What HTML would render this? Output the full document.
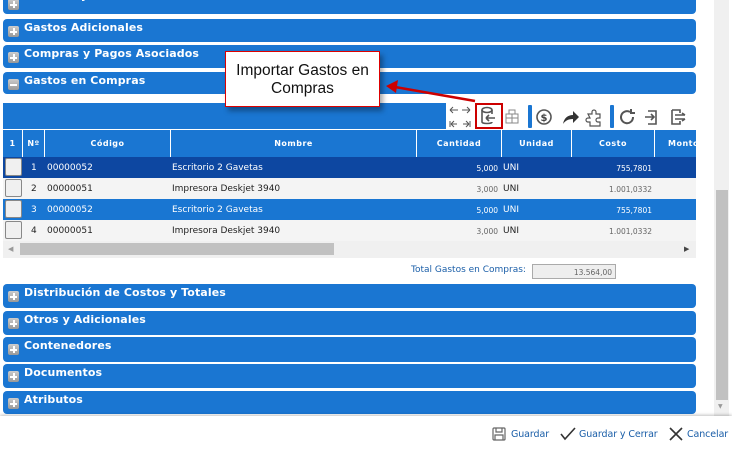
<!DOCTYPE html>
<html><head><meta charset="utf-8"><style>
*{margin:0;padding:0;box-sizing:border-box}
body{width:732px;height:449px;overflow:hidden;background:#fff;font-family:"DejaVu Sans","Liberation Sans",sans-serif;position:relative}
.bar{position:absolute;left:3px;width:693px;background:#1a76d2;border-radius:4px;color:#fff;font-weight:bold;font-size:11px}
.bar span.t{position:absolute;left:21px;top:2px;letter-spacing:0.1px}
.pm{position:absolute;left:5px;top:7px;width:11px;height:11px;background:linear-gradient(#ccc,#999);border-radius:2px}
.pm:before{content:"";position:absolute;left:2px;top:5px;width:7px;height:1.5px;background:#fff}
.pm.p:after{content:"";position:absolute;left:5px;top:2px;width:1.5px;height:7px;background:#fff}
.abs{position:absolute}
.hdr{position:absolute;top:130px;height:27px;background:#1a76d2;color:#fff;font-size:8px;font-weight:bold;display:flex;left:3px;width:693px}
.hdr div{border-right:1px solid #fff;display:flex;align-items:center;justify-content:center;letter-spacing:0.5px}
.row{position:absolute;left:3px;width:693px;height:21px;font-size:9px;font-family:"DejaVu Sans",sans-serif}
.row .c{position:absolute;top:6px}
.cb{position:absolute;left:2px;top:1px;width:17px;height:18px;border:1px solid #888;border-radius:2px;background:#f0f0f0}
.r1{background:#0d47a1;color:#fff}.r3{background:#1976d2;color:#fff}.r2{background:#f4f4f4;color:#222}
.num{font-size:7.5px;text-align:right}
.btn{font-size:9.5px;color:#1a5ea8;top:429px;letter-spacing:-0.1px;white-space:nowrap}
</style></head><body>
<div class="bar" style="top:-8px;height:22px"><div class="pm p"></div><span class="t" style="top:-3px">Gastos Fijos</span></div>
<div class="bar" style="top:19px;height:23px"><div class="pm p"></div><span class="t">Gastos Adicionales</span></div>
<div class="bar" style="top:45px;height:23px"><div class="pm p"></div><span class="t">Compras y Pagos Asociados</span></div>
<div class="bar" style="top:72px;height:22px"><div class="pm"></div><span class="t">Gastos en Compras</span></div>

<div class="abs" style="left:3px;top:103px;width:443px;height:26px;background:#1a76d2"></div>
<svg class="abs" style="left:446px;top:102px" width="250" height="28" viewBox="0 0 250 28" fill="none" stroke="#555" stroke-width="1.6">
<path d="M4 8h8M4 8l3-3M4 8l3 3M16 8h8M24 8l-3-3M24 8l-3 3" stroke-width="1"/>
<path d="M4 19v6M5 22h6M5 22l3-3M5 22l3 3M17 22h6M23 22l-3-3M23 22l-3 3M24 19v6" stroke-width="1"/>
<ellipse cx="41" cy="8" rx="5" ry="2.5"/><path d="M36 8v12c0 2 10 2 10 0M46 8v4M40 16h9M40 16l3-3M40 16l3 3"/>
<path d="M60 12h6v4h-6zM66 12h6v4h-6zM63 8h6v4h-6zM60 16h6v5h-6zM66 16h6v5h-6z" stroke="#888" stroke-width="1"/>
<rect x="82" y="3" width="4" height="23" fill="#1a76d2" stroke="none" rx="1"/>
<circle cx="98" cy="15" r="7"/><text x="98" y="19" font-size="10" text-anchor="middle" fill="#444" stroke="none" font-weight="bold">$</text>
<path d="M117 22c1-6 5-9 10-9v-4l6 6-6 6v-4c-5 0-8 2-10 5z" fill="#333" stroke="none"/>
<path d="M142 12h4v-2a2 2 0 014 0v2h4v4h-2a2 2 0 000 4h2v4h-10v-4h-2a2 2 0 010-4h2z" stroke-width="1.2"/>
<rect x="164" y="3" width="4" height="23" fill="#1a76d2" stroke="none" rx="1"/>
<path d="M187 15a6 6 0 11-3-5M185 7v4h4" stroke-width="2"/>
<path d="M199 15h9M205 12l3 3-3 3M202 9h8v13h-8"/>
<path d="M226 8h8v3M226 8v14h8v-3M229 13h10M229 17h10M236 11l3 2M236 19l3-2"/>
</svg>
<div class="abs" style="left:475px;top:103px;width:28px;height:26px;border:2px solid #c00"></div>

<div class="hdr">
<div style="width:20px">1</div><div style="width:22px">Nº</div><div style="width:126px">Código</div><div style="width:246px">Nombre</div><div style="width:85px">Cantidad</div><div style="width:70px">Unidad</div><div style="width:83px">Costo</div><div style="width:41px;border:none;justify-content:flex-start;padding-left:13px">Monto</div>
</div>

<div class="row r1" style="top:157px"><div class="cb"></div><span class="c" style="left:28px">1</span><span class="c" style="left:44px">00000052</span><span class="c" style="left:169px">Escritorio 2 Gavetas</span><span class="c num" style="right:198px;top:7px">5,000</span><span class="c" style="left:500px">UNI</span><span class="c num" style="right:44px;top:7px">755,7801</span></div>
<div class="row r2" style="top:178px"><div class="cb"></div><span class="c" style="left:28px">2</span><span class="c" style="left:44px">00000051</span><span class="c" style="left:169px">Impresora Deskjet 3940</span><span class="c num" style="right:198px;top:7px;color:#666">3,000</span><span class="c" style="left:500px">UNI</span><span class="c num" style="right:44px;top:7px;color:#666">1.001,0332</span></div>
<div class="row r3" style="top:199px"><div class="cb"></div><span class="c" style="left:28px">3</span><span class="c" style="left:44px">00000052</span><span class="c" style="left:169px">Escritorio 2 Gavetas</span><span class="c num" style="right:198px;top:7px">5,000</span><span class="c" style="left:500px">UNI</span><span class="c num" style="right:44px;top:7px">755,7801</span></div>
<div class="row r2" style="top:220px"><div class="cb"></div><span class="c" style="left:28px">4</span><span class="c" style="left:44px">00000051</span><span class="c" style="left:169px">Impresora Deskjet 3940</span><span class="c num" style="right:198px;top:7px;color:#666">3,000</span><span class="c" style="left:500px">UNI</span><span class="c num" style="right:44px;top:7px;color:#666">1.001,0332</span></div>
<div class="abs" style="left:3px;top:241px;width:693px;height:17px;background:#f0f0f0"></div>
<div class="abs" style="left:20px;top:243px;width:314px;height:12px;background:#c1c1c1"></div>
<div class="abs" style="left:8px;top:245px;font-size:7px;color:#999">◀</div>
<div class="abs" style="left:684px;top:245px;font-size:7px;color:#444">▶</div>

<div class="abs" style="left:411px;top:265px;font-size:9px;color:#1a5ea8">Total Gastos en Compras:</div>
<div class="abs" style="left:532px;top:264px;width:84px;height:15px;border:1px solid #aaa;background:#eee;font-size:7.5px;color:#666;text-align:right;padding:3px 3px 0 0">13.564,00</div>

<div class="bar" style="top:284px;height:24px"><div class="pm p"></div><span class="t">Distribución de Costos y Totales</span></div>
<div class="bar" style="top:311px;height:24px"><div class="pm p"></div><span class="t">Otros y Adicionales</span></div>
<div class="bar" style="top:337px;height:25px"><div class="pm p"></div><span class="t">Contenedores</span></div>
<div class="bar" style="top:364px;height:24px"><div class="pm p"></div><span class="t">Documentos</span></div>
<div class="bar" style="top:391px;height:23px"><div class="pm p"></div><span class="t">Atributos</span></div>

<div class="abs" style="left:714px;top:0;width:15px;height:416px;background:#f0f0f0"></div>
<div class="abs" style="left:716px;top:190px;width:12px;height:210px;background:#c1c1c1"></div>
<div class="abs" style="left:718px;top:403px;font-size:6px;color:#999">▼</div>

<div class="abs" style="left:0;top:416px;width:732px;height:33px;background:#fff;box-shadow:0 -1px 3px rgba(0,0,0,.25)"></div>
<svg class="abs" style="left:492px;top:427px" width="14" height="14" viewBox="0 0 14 14" fill="none" stroke="#666" stroke-width="1.2"><rect x="1" y="1" width="12" height="12" rx="1"/><path d="M4 1v4h6V1M3 13V8h8v5"/></svg>
<div class="abs btn" style="left:511px">Guardar</div>
<svg class="abs" style="left:560px;top:427px" width="16" height="14" viewBox="0 0 16 14" fill="none" stroke="#333" stroke-width="1.6"><path d="M1 7l4 5L15 1"/></svg>
<div class="abs btn" style="left:579px">Guardar y Cerrar</div>
<svg class="abs" style="left:669px;top:427px" width="14" height="14" viewBox="0 0 14 14" fill="none" stroke="#333" stroke-width="1.6"><path d="M1 1l12 12M13 1L1 13"/></svg>
<div class="abs btn" style="left:687px">Cancelar</div>

<svg class="abs" style="left:0;top:0" width="732" height="449" viewBox="0 0 732 449"><path d="M475 101L395 87" stroke="#c00" stroke-width="2.5" fill="none"/><path d="M386 86l12-6-2 13z" fill="#c00"/></svg>
<div class="abs" style="left:225px;top:51px;width:155px;height:56px;background:#fff;border:1px solid #d00;box-shadow:3px 4px 5px rgba(0,0,0,.35);font-family:'Liberation Sans',sans-serif;font-size:15.5px;color:#111;text-align:center;line-height:18px;padding-top:10px">Importar Gastos en<br>Compras</div>
</body></html>
